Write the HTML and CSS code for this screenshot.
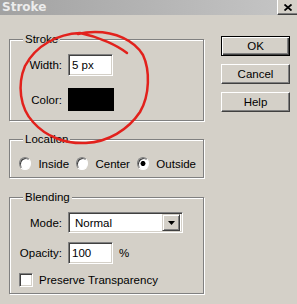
FILE: index.html
```html
<!DOCTYPE html>
<html>
<head>
<meta charset="utf-8">
<link rel="stylesheet" href="styles.css">
</head>
<body>
<div class="titlebar">
  <span class="title">Stroke</span>
  <span class="close"><svg width="8" height="7" viewBox="0 0 8 7"><path d="M0.5 0.5L7.5 6.5M7.5 0.5L0.5 6.5" stroke="#000" stroke-width="1.8"/></svg></span>
</div>
<div class="dialog">
  <div class="groups">
    <div class="group stroke">
      <div class="legend">Stroke</div>
      <div class="fields">
        <span class="lbl">Width:</span><div class="input w-input">5 px</div>
        <span class="lbl">Color:</span><div class="swatch"></div>
      </div>
    </div>
    <div class="group location">
      <div class="legend">Location</div>
      <div class="radios">
        <span class="radio"></span><span class="rlabel">Inside</span>
        <span class="radio"></span><span class="rlabel">Center</span>
        <span class="radio on"></span><span class="rlabel">Outside</span>
      </div>
    </div>
    <div class="group blending">
      <div class="legend">Blending</div>
      <div class="fields bfields">
        <span class="lbl">Mode:</span>
        <div class="select"><span class="val">Normal</span><span class="arrow"><svg width="7" height="4" viewBox="0 0 7 4"><polygon points="0,0 7,0 3.5,4" fill="#000"/></svg></span></div>
        <span class="lbl">Opacity:</span>
        <div class="opac"><div class="input o-input">100</div><span class="pct">%</span></div>
      </div>
      <div class="check-row"><span class="checkbox"></span><span class="clabel">Preserve Transparency</span></div>
    </div>
  </div>
  <div class="buttons">
    <div class="btn default">OK</div>
    <div class="btn">Cancel</div>
    <div class="btn">Help</div>
  </div>
</div>
<svg class="annot" width="297" height="304" viewBox="0 0 297 304"><path d="M127,53 C118,46 100,37 80,33 C58,34 36,45 25,66 C17,85 20,108 33,122 C46,137 66,144 86,143 C108,142 128,130 140,112 C150,95 150,70 143,55 C134,40 115,32 95,32 C88,32 82,33 78,34" fill="none" stroke="#e2211c" stroke-width="2.5" stroke-linecap="round" stroke-linejoin="round"/></svg>
</body>
</html>
```
FILE: styles.css
```css
html, body {
  margin: 0;
  padding: 0;
}
body {
  width: 297px;
  height: 304px;
  overflow: hidden;
  position: relative;
  background: #d4d0c8;
  font-family: "Liberation Sans", Arial, sans-serif;
  font-size: 11.5px;
  color: #000;
}
.titlebar {
  height: 15px;
  display: flex;
  justify-content: space-between;
  align-items: flex-start;
  background: linear-gradient(to right, #a2a2a2, #c6c6c6);
}
.title {
  font-family: "DejaVu Sans", sans-serif;
  font-weight: bold;
  font-size: 12px;
  line-height: 15px;
  color: #ececec;
  padding-left: 2px;
}
.close {
  width: 20px;
  height: 15px;
  box-sizing: border-box;
  background: #d4d0c8;
  border-left: 1px solid #fff;
  border-bottom: 1px solid #404040;
  box-shadow: inset 0 -1px 0 #808080;
  display: flex;
  align-items: center;
  justify-content: center;
}
.close svg { display: block; }
.dialog {
  display: flex;
  align-items: flex-start;
  padding: 21px 0 0 9px;
  gap: 17px;
}
.groups {
  width: 195px;
  padding-top: 3px;
  display: flex;
  flex-direction: column;
}
.group {
  border: 1px solid #808080;
  box-shadow: 1px 1px 0 #fff, inset 1px 1px 0 #fff;
}
.legend {
  display: table;
  margin: -7px 0 0 13px;
  padding: 0 2px;
  height: 13px;
  line-height: 13px;
  background: #d4d0c8;
}
.fields {
  display: grid;
  grid-template-columns: 52px auto;
  column-gap: 6px;
  align-items: center;
  justify-items: start;
}
.stroke .fields {
  margin-top: 8px;
  row-gap: 12px;
  padding-bottom: 9px;
}
.lbl { justify-self: end; }
.input {
  box-sizing: border-box;
  height: 22px;
  background: #fff;
  border: 1px solid;
  border-color: #808080 #fff #fff #808080;
  box-shadow: inset 1px 1px 0 #404040, inset -1px -1px 0 #d4d0c8;
  padding-left: 3px;
  line-height: 20px;
}
.w-input { width: 45px; }
.swatch {
  width: 46px;
  height: 23px;
  background: #000;
}
.location { margin-top: 18px; }
.radios {
  display: flex;
  align-items: center;
  height: 13px;
  margin: 11px 0 0 9px;
  padding-bottom: 7px;
}
.radio {
  width: 13px;
  height: 13px;
  box-sizing: border-box;
  border-radius: 50%;
  background: #fff;
  border: 1px solid;
  border-color: #808080 #fff #fff #808080;
  box-shadow: inset 1px 1px 0 #404040;
  margin-right: 7px;
}
.radio.on {
  background: radial-gradient(circle, #000 0 2.2px, #fff 2.8px);
}
.rlabel { margin-right: 7px; }
.blending { margin-top: 19px; }
.bfields {
  margin-top: 8px;
  row-gap: 9px;
}
.select {
  box-sizing: border-box;
  width: 115px;
  height: 21px;
  display: flex;
  align-items: center;
  justify-content: space-between;
  background: #fff;
  border: 1px solid;
  border-color: #808080 #fff #fff #808080;
  box-shadow: inset 1px 1px 0 #404040, inset -1px -1px 0 #d4d0c8;
  padding: 2px;
}
.val { padding-left: 4px; }
.arrow {
  box-sizing: border-box;
  width: 18px;
  height: 17px;
  background: #d4d0c8;
  border: 1px solid;
  border-color: #d4d0c8 #404040 #404040 #d4d0c8;
  box-shadow: inset 1px 1px 0 #fff, inset -1px -1px 0 #808080;
  display: flex;
  align-items: center;
  justify-content: center;
}
.arrow svg { display: block; }
.opac {
  display: flex;
  align-items: center;
}
.o-input { width: 45px; }
.pct { margin-left: 6px; }
.check-row {
  display: flex;
  align-items: center;
  margin: 9px 0 0 9px;
  padding-bottom: 6px;
  white-space: nowrap;
}
.checkbox {
  width: 14px;
  height: 14px;
  box-sizing: border-box;
  background: #fff;
  border: 1px solid;
  border-color: #808080 #fff #fff #808080;
  box-shadow: inset 1px 1px 0 #404040, inset -1px -1px 0 #d4d0c8;
  margin-right: 6px;
}
.buttons {
  display: flex;
  flex-direction: column;
  gap: 8px;
}
.btn {
  box-sizing: border-box;
  width: 69px;
  height: 20px;
  border: 1px solid;
  border-color: #fff #404040 #404040 #fff;
  box-shadow: inset -1px -1px 0 #808080;
  display: flex;
  align-items: center;
  justify-content: center;
}
.btn.default {
  border-color: #000;
  box-shadow: inset 1px 1px 0 #fff, inset -1px -1px 0 #404040, inset -2px -2px 0 #808080;
}
.annot {
  position: absolute;
  left: 0;
  top: 0;
  pointer-events: none;
}
```
